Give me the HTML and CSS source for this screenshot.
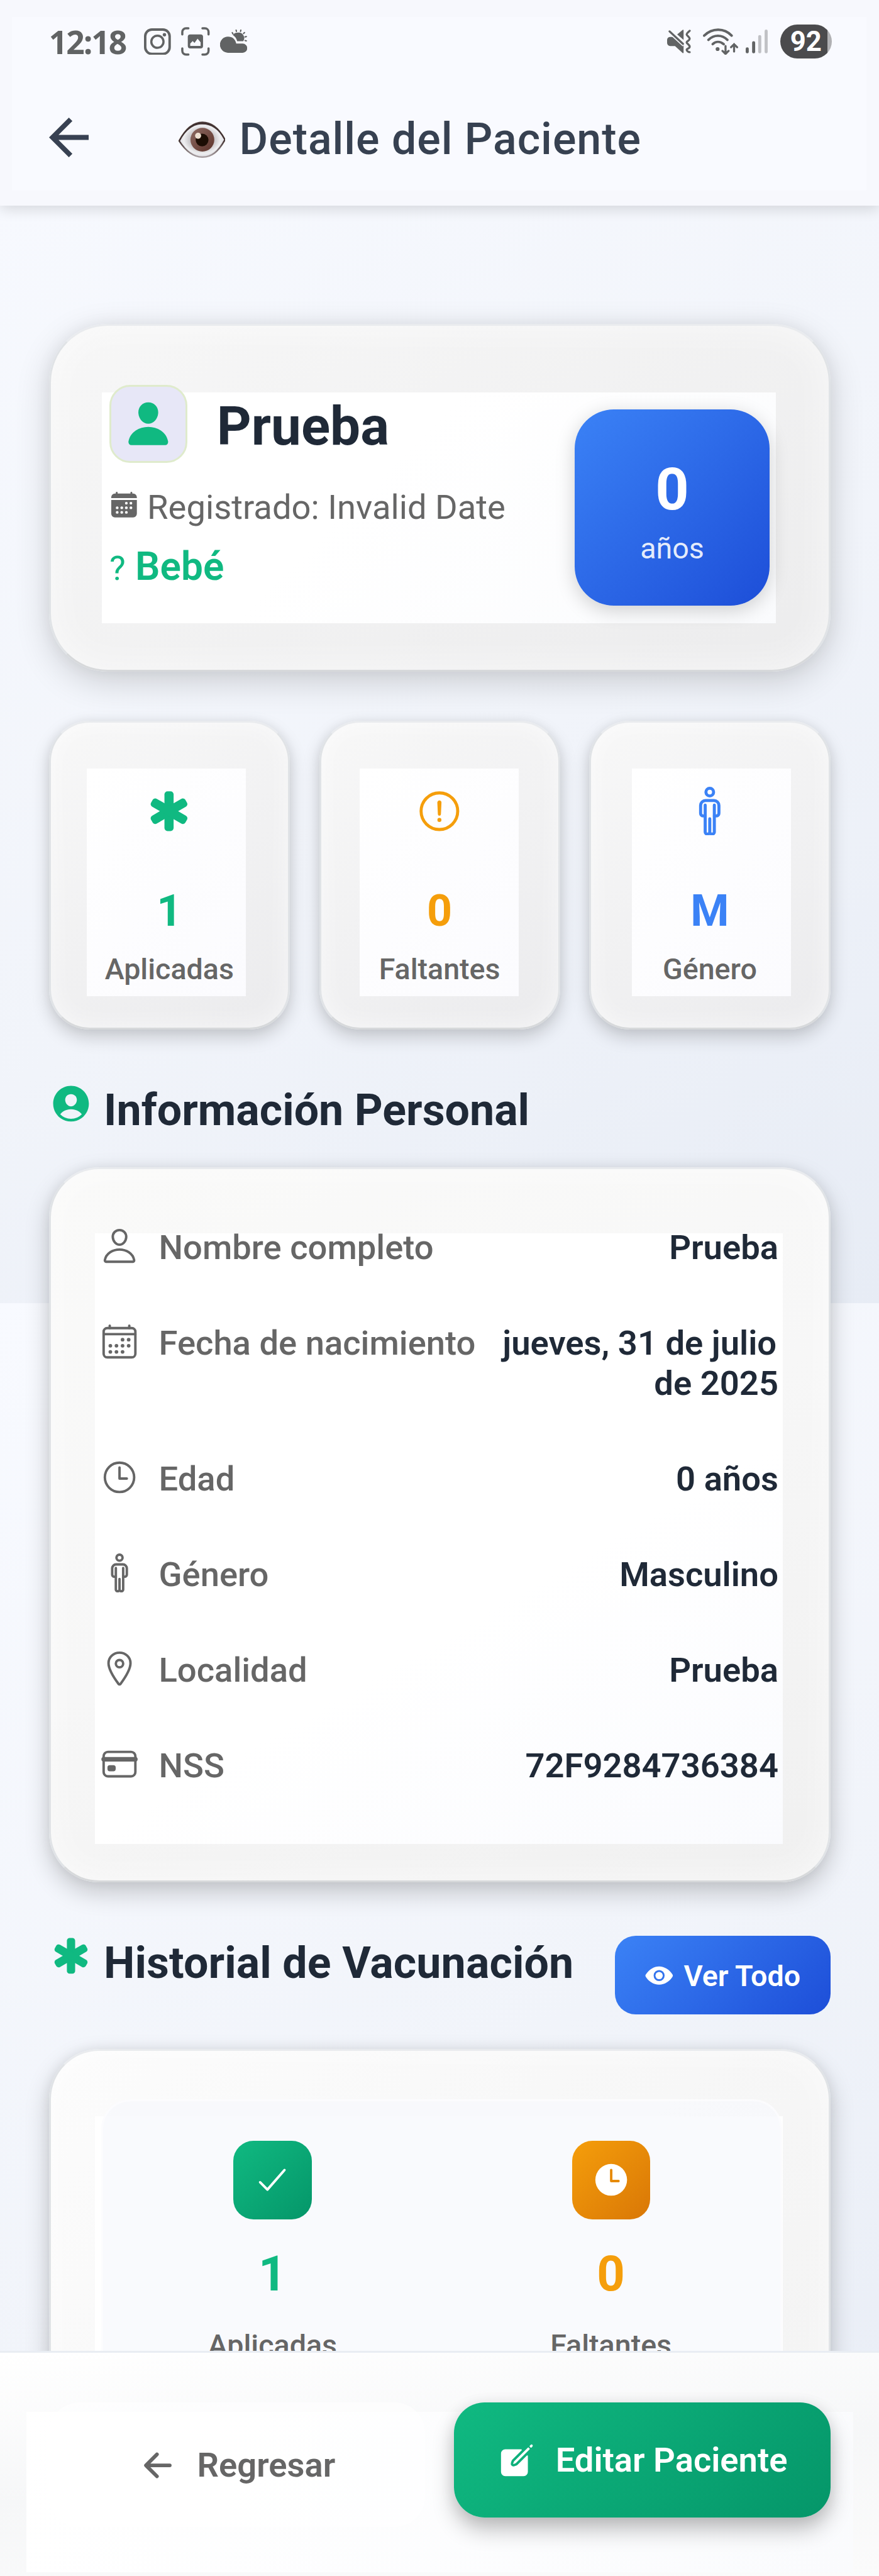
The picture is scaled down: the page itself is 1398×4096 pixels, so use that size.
FILE: index.html
```html
<!DOCTYPE html>
<html lang="es">
<head>
<meta charset="utf-8">
<title>Detalle del Paciente</title>
<link rel="stylesheet" href="styles.css">
</head>
<body>
<svg class="defs" width="0" height="0">
  <symbol id="man" viewBox="0 0 512 512"><g fill="none" stroke="currentColor" stroke-width="32" stroke-linecap="round" stroke-linejoin="round"><circle cx="256" cy="56" r="40"/><path d="M208 192v282a22 22 0 0 0 22 22h4a22 22 0 0 0 22-22V336v138a22 22 0 0 0 22 22h4a22 22 0 0 0 22-22V192"/><path d="M208 306h-20a28 28 0 0 1-28-28V196a52 52 0 0 1 52-52h88a52 52 0 0 1 52 52v82a28 28 0 0 1-28 28h-20"/></g></symbol>
  <symbol id="medical" viewBox="0 0 512 512"><g fill="currentColor"><rect x="208" y="48" width="96" height="416" rx="32"/><rect x="208" y="48" width="96" height="416" rx="32" transform="rotate(60 256 256)"/><rect x="208" y="48" width="96" height="416" rx="32" transform="rotate(120 256 256)"/></g></symbol>
</svg>
<div class="screen">
  <header class="header">
    <div class="status">
      <span class="clock">12:18</span>
      <svg class="st-insta" viewBox="0 0 44 44"><rect x="2" y="2" width="40" height="40" rx="11" fill="none" stroke="#616364" stroke-width="4"/><circle cx="22" cy="22" r="10" fill="none" stroke="#616364" stroke-width="3.6"/><circle cx="33.5" cy="10.500" r="2.8" fill="#616364"/></svg>
      <svg class="st-shot" viewBox="0 0 47 47"><g fill="none" stroke="#616364" stroke-width="3.6" stroke-linecap="round"><path d="M2 12V8a6 6 0 0 1 6-6h4M35 2h4a6 6 0 0 1 6 6v4M45 35v4a6 6 0 0 1-6 6h-4M12 45H8a6 6 0 0 1-6-6v-4"/></g><rect x="11" y="12" width="25" height="23" rx="4" fill="#616364"/><path d="M15 31v-4l4-4 3 3 5-7 5 6v6z" fill="#f9faff"/></svg>
      <svg class="st-cloud" viewBox="0 0 44 39"><path d="M30 5a9 9 0 0 1 8 14H28c-1-5-4-8-7-10 2-3 5-4 9-4z" fill="#616364"/><path d="M13 11.500c7 0 12 4 13.500 11.500H37a7.500 7.500 0 0 1 0 15H13a13 13 0 0 1 0-26.500z" fill="#616364"/><g stroke="#616364" stroke-width="2.200" stroke-linecap="round"><path d="M20 5l1 2M26.300 1l.5 2M34 1l-.5 2M40 5l-1.500 1.500M43 11.500l-2 .5M43 18.500l-2-.5"/></g></svg>
      <svg class="st-mute" viewBox="0 0 39 39"><path d="M5 12h5l17 14v11.500c0 1-.8 1.500-1.600.8L13 27H5a5 5 0 0 1-5-5v-5a5 5 0 0 1 5-5zM27 1.500V17L16.500 8l9-7.500c.8-.6 1.500 0 1.500 1z" fill="#616364"/><path d="M4 3l24 22" stroke="#f9faff" stroke-width="7"/><path d="M4 3l22 20.500" stroke="#616364" stroke-width="3.400" stroke-linecap="round"/><path d="M37 2c-3 3-5 4-5 6s5 4 5 7-5 4-5 6 5 4 5 7-5 3-5 5 3 4 5 4" fill="none" stroke="#616364" stroke-width="3.400" stroke-linecap="round"/></svg>
      <svg class="st-wifi" viewBox="0 0 58 44"><g fill="none" stroke="#616364" stroke-width="4" stroke-linecap="round"><path d="M2 12c13-13 33-13 45 0M9 19c9-9 22-9 31 0M16 26c5-5 12-5 18 0"/><path d="M37 29v12M32 37l5 5 5-5M51 38V26M46 31l5-5 5 5" stroke-width="3.400"/></g><circle cx="24" cy="34" r="3.200" fill="#616364"/></svg>
      <svg class="st-signal" viewBox="0 0 37 40"><rect y="29" width="5" height="10" rx="2.500" fill="#616364"/><rect x="10.500" y="19" width="5" height="20" rx="2.500" fill="#616364"/><rect x="20.500" y="9" width="5" height="30" rx="2.500" fill="#c0c1c5"/><rect x="31" y="0" width="5" height="39" rx="2.500" fill="#c0c1c5"/></svg>
      <span class="battery">92</span>
    </div>
    <div class="titlebar">
      <svg class="back" viewBox="4 4 16 16"><path d="M20 11H7.830l5.590-5.590L12 4l-8 8 8 8 1.410-1.410L7.830 13H20v-2z" fill="#384152"/></svg>
      <svg class="eye" viewBox="0 0 77 60">
        <defs>
          <radialGradient id="ball" cx=".5" cy=".5" r=".5"><stop offset=".5" stop-color="#c4c1c4"/><stop offset=".8" stop-color="#eeeef0"/><stop offset="1" stop-color="#dcdbe2"/></radialGradient>
          <linearGradient id="iris" x1="0" y1="0" x2="1" y2="1"><stop offset="0" stop-color="#8e6b64"/><stop offset="1" stop-color="#5c3229"/></linearGradient>
          <linearGradient id="lid" x1="0" y1="0" x2="0" y2="1"><stop offset="0" stop-color="#584745"/><stop offset=".5" stop-color="#3f2e2d"/><stop offset="1" stop-color="#aaa0a3"/></linearGradient>
        </defs>
        <path d="M1 32C12 11 24 1.500 39 1.500S66 11 76 30C65 50 54 58.500 39 58.500S12 49 1 32z" fill="url(#ball)" stroke="url(#lid)" stroke-width="2.500"/>
        <path d="M1 32C12 11 24 1.500 39 1.500S66 11 76 30C65 13 54 5 39 5S14 13 1 32z" fill="#3f302f"/>
        <circle cx="39" cy="30" r="19.500" fill="url(#iris)"/><circle cx="38.500" cy="30.500" r="10.500" fill="#1c0d04"/><circle cx="32" cy="23.500" r="5" fill="#eee0d2"/>
      </svg>
      <h1 class="title">Detalle del Paciente</h1>
    </div>
  </header>

  <main class="content">
    <section class="card hero">
      <div class="hero-info">
        <div class="hero-name">
          <span class="avatar"><svg viewBox="0 0 512 512"><path fill="#10b981" d="M332.640 64.580C313.180 43.570 286 32 256 32c-30.160 0-57.430 11.500-76.800 32.380-19.580 21.110-29.120 49.800-26.880 80.780C156.760 206.280 203.270 256 256 256s99.160-49.710 103.670-110.820c2.270-30.700-7.330-59.330-27.030-80.600zM432 480H80a31 31 0 0 1-24.200-11.130c-6.500-7.770-9.120-18.380-7.180-29.110C57.060 392.940 83.400 353.610 124.800 326c36.780-24.510 83.370-38 131.200-38s94.420 13.500 131.200 38c41.400 27.600 67.740 66.930 76.180 113.750 1.940 10.730-.68 21.340-7.180 29.110A31 31 0 0 1 432 480z"/></svg></span>
          <h2>Prueba</h2>
        </div>
        <div class="registered">
          <svg viewBox="0 0 512 512"><path fill="#666" d="M480 128a64 64 0 0 0-64-64h-16V48a16 16 0 0 0-32 0v16H144V48a16 16 0 0 0-32 0v16H96a64 64 0 0 0-64 64v16h448zM32 416a64 64 0 0 0 64 64h320a64 64 0 0 0 64-64V176H32z"/><g fill="#fdfdfd"><circle cx="296" cy="232" r="24"/><circle cx="376" cy="232" r="24"/><circle cx="136" cy="312" r="24"/><circle cx="216" cy="312" r="24"/><circle cx="296" cy="312" r="24"/><circle cx="376" cy="312" r="24"/><circle cx="136" cy="392" r="24"/><circle cx="216" cy="392" r="24"/><circle cx="296" cy="392" r="24"/></g></svg>
          <span>Registrado: Invalid Date</span>
        </div>
        <div class="stage"><span class="q">?</span><strong>Bebé</strong></div>
      </div>
      <div class="age"><strong>0</strong><span>años</span></div>
    </section>

    <section class="stats">
      <div class="card stat stat-a green"><svg><use href="#medical"/></svg><strong>1</strong><span>Aplicadas</span></div>
      <div class="card stat stat-b orange"><svg viewBox="0 0 512 512"><circle cx="256" cy="256" r="192" fill="none" stroke="currentColor" stroke-width="32"/><path d="M250.260 166.050L256 288l5.730-121.950a5.740 5.740 0 0 0-5.790-6 5.740 5.740 0 0 0-5.680 6z" fill="currentColor" stroke="currentColor" stroke-width="32" stroke-linecap="round" stroke-linejoin="round"/><circle cx="256" cy="348" r="21" fill="currentColor"/></svg><strong>0</strong><span>Faltantes</span></div>
      <div class="card stat stat-c blue"><svg><use href="#man"/></svg><strong>M</strong><span>Género</span></div>
    </section>

    <div class="section-head first">
      <svg class="green" viewBox="0 0 512 512"><path fill="currentColor" d="M256 48C141.310 48 48 141.310 48 256s93.310 208 208 208 208-93.310 208-208S370.690 48 256 48zm-50.220 116.820C218.450 151.390 236.280 144 256 144s37.390 7.440 50.110 20.940c12.890 13.680 19.160 32.060 17.680 51.820C320.830 256 290.430 288 256 288s-64.890-32-67.790-71.250c-1.470-19.920 4.790-38.360 17.570-51.930zM256 432a175.490 175.490 0 0 1-126-53.220 122.910 122.910 0 0 1 35.140-33.440C190.630 329 222.890 320 256 320s65.370 9 90.830 25.340A122.870 122.870 0 0 1 382 378.780 175.450 175.450 0 0 1 256 432z"/></svg>
      <h3>Información Personal</h3>
    </div>

    <section class="card info">
      <div class="row"><svg viewBox="0 0 512 512"><path d="M344 144c-3.920 52.870-44 96-88 96s-84.150-43.120-88-96c-4-55 35-96 88-96s92 42 88 96z"/><path d="M256 304c-87 0-175.300 48-191.640 138.600C62.390 453.520 68.570 464 80 464h352c11.440 0 17.620-10.480 15.650-21.400C431.300 352 343 304 256 304z"/></svg><span class="label">Nombre completo</span><span class="value">Prueba</span></div>
      <div class="row"><svg viewBox="0 0 512 512"><rect x="48" y="80" width="416" height="384" rx="48"/><path d="M128 48v32M384 48v32M464 160H48"/><g class="dots"><circle cx="296" cy="232" r="24"/><circle cx="376" cy="232" r="24"/><circle cx="136" cy="312" r="24"/><circle cx="216" cy="312" r="24"/><circle cx="296" cy="312" r="24"/><circle cx="376" cy="312" r="24"/><circle cx="136" cy="392" r="24"/><circle cx="216" cy="392" r="24"/><circle cx="296" cy="392" r="24"/></g></svg><span class="label">Fecha de nacimiento</span><span class="value"><span class="wrapped">jueves, 31 de julio</span><br>de 2025</span></div>
      <div class="row"><svg viewBox="0 0 512 512"><circle cx="256" cy="256" r="192"/><path d="M256 128v144h96"/></svg><span class="label">Edad</span><span class="value">0 años</span></div>
      <div class="row"><svg><use href="#man"/></svg><span class="label">Género</span><span class="value">Masculino</span></div>
      <div class="row"><svg viewBox="0 0 512 512"><path d="M256 48c-79.500 0-144 61.390-144 137 0 87 96 224.870 131.250 272.490a15.770 15.770 0 0 0 25.500 0C304 409.890 400 272.070 400 185c0-75.610-64.500-137-144-137z"/><circle cx="256" cy="192" r="48"/></svg><span class="label">Localidad</span><span class="value">Prueba</span></div>
      <div class="row"><svg viewBox="0 0 512 512"><rect x="48" y="96" width="416" height="320" rx="56"/><path d="M48 192h416M128 300h48v20h-48z" stroke-width="60"/></svg><span class="label">NSS</span><span class="value">72F9284736384</span></div>
    </section>

    <div class="section-head second">
      <svg class="green"><use href="#medical"/></svg>
      <h3>Historial de Vacunación</h3>
      <button class="see-all"><svg viewBox="0 0 512 512"><circle cx="256" cy="256" r="64" fill="#fff"/><path fill="#fff" d="M490.840 238.600c-26.460-40.920-60.790-75.680-99.270-100.530C349 110.550 302 96 255.660 96c-42.520 0-84.330 12.150-124.270 36.110-40.730 24.430-77.630 60.120-109.680 106.070a31.920 31.920 0 0 0-.64 35.540c26.410 41.330 60.400 76.140 98.280 100.650C162 402 207.900 416 255.660 416c46.710 0 93.810-14.430 136.200-41.720 38.460-24.770 72.720-59.660 99.080-100.920a32.200 32.200 0 0 0-.1-34.760zM256 352a96 96 0 1 1 96-96 96.110 96.110 0 0 1-96 96z"/></svg>Ver Todo</button>
    </div>

    <section class="card history">
      <div class="panel">
        <div class="count green"><span class="chip chip-green"><svg viewBox="0 0 512 512"><path d="M416 128L192 384l-96-96" fill="none" stroke="#fff" stroke-width="32" stroke-linecap="round" stroke-linejoin="round"/></svg></span><strong>1</strong><span class="cap">Aplicadas</span></div>
        <div class="count orange"><span class="chip chip-orange"><svg viewBox="0 0 512 512"><circle cx="256" cy="256" r="208" fill="#fff"/><path d="M256 128v144h96" fill="none" stroke="#e68a09" stroke-width="32" stroke-linecap="round" stroke-linejoin="round"/></svg></span><strong>0</strong><span class="cap">Faltantes</span></div>
      </div>
    </section>
  </main>

  <footer class="footer">
    <button class="btn btn-back"><svg viewBox="0 0 512 512"><path d="M244 400L100 256l144-144M120 256h292" fill="none" stroke="#666" stroke-width="48" stroke-linecap="round" stroke-linejoin="round"/></svg>Regresar</button>
    <button class="btn btn-edit"><svg viewBox="0 0 512 512"><path fill="#fff" d="M459.940 53.250a16.060 16.060 0 0 0-23.220-.56L424.350 65a8 8 0 0 0 0 11.310l11.340 11.320a8 8 0 0 0 11.340 0l12.060-12c6.100-6.090 6.670-16.010.85-22.380zM399.340 90L218.820 270.200a9 9 0 0 0-2.310 3.930L208.160 299a3.910 3.910 0 0 0 4.860 4.860l24.850-8.350a9 9 0 0 0 3.930-2.310L422 112.660a9 9 0 0 0 0-12.660l-9.950-10a9 9 0 0 0-12.710 0z"/><path fill="#fff" d="M386.340 193.660L264.450 315.790A41.080 41.080 0 0 1 247.580 326l-25.900 8.670a35.920 35.920 0 0 1-44.330-44.330l8.670-25.900a41.080 41.080 0 0 1 10.190-16.870l122.130-121.910a8 8 0 0 0-5.650-13.660H104a56 56 0 0 0-56 56v240a56 56 0 0 0 56 56h240a56 56 0 0 0 56-56V199.310a8 8 0 0 0-13.660-5.650z"/></svg>Editar Paciente</button>
  </footer>
</div>
</body>
</html>
```

FILE: styles.css
```css
* { box-sizing: border-box; }
html, body { margin: 0; overflow: hidden; }
body { font-family: Roboto, "Liberation Sans", sans-serif; }
h1, h2, h3 { margin: 0; }
svg { display: block; flex: none; }
button { border: 0; font: inherit; }
.defs { position: absolute; }

.green { color: #10b981; }
.orange { color: #f59e0b; }
.blue { color: #3b82f6; }

.screen {
  zoom: 0.971;
  width: 1440px;
  height: 4219px;
  display: flex;
  flex-direction: column;
  overflow: hidden;
  background: linear-gradient(146deg, #f8faff 0%, #f1f4fa 58%, #e7ecf5 100%) 0 0 / 1440px 2134px repeat-y;
}

/* Header */
.header {
  flex: none;
  height: 337px;
  position: relative;
  z-index: 1;
  background: linear-gradient(#f9faff, #f9faff) 20px 28px / 1400px 284px no-repeat, #f7f8fd;
  box-shadow: 0 6px 22px rgba(0, 0, 0, .14);
}
.status {
  display: flex;
  align-items: center;
  height: 96px;
  padding: 40px 78px 0 80px;
}
.clock {
  font: 700 53px/56px "Open Sans", sans-serif;
  letter-spacing: -2px;
  color: #616364;
  width: 156px;
}
.st-insta { width: 44px; height: 44px; margin-right: 17px; }
.st-shot { width: 47px; height: 47px; margin-right: 17px; }
.st-cloud { width: 44px; height: 39px; margin-right: auto; }
.st-mute { width: 39px; height: 39px; margin-right: 19px; }
.st-wifi { width: 58px; height: 44px; margin-right: 12px; }
.st-signal { width: 37px; height: 40px; margin-right: 20px; }
.battery {
  width: 84px;
  height: 56px;
  border-radius: 28px;
  text-align: center;
  font: 700 45px/57px Roboto, sans-serif;
  color: #fff;
  background: linear-gradient(90deg, #4b4b4d 77px, #b0b0b3 77px);
}
.titlebar {
  display: flex;
  align-items: center;
  height: 241px;
  padding: 18px 80px 0;
}
.back { width: 65px; height: 65px; }
.eye { width: 77px; height: 60px; margin: 6px 23px 0 147px; }
.title { font-size: 72px; font-weight: 500; line-height: 84px; letter-spacing: 1px; color: #374151; margin-top: 6px; white-space: nowrap; }

/* Content */
.content { flex: 1; min-height: 0; overflow: hidden; padding: 193px 80px 0; }

.card {
  border: 4px solid;
  border-color: #e9ebee #e0e3e6 #d7d9db;
}
.hero {
  display: flex;
  justify-content: space-between;
  align-items: flex-start;
  height: 570px;
  padding: 97px 96px 95px;
  border-radius: 96px;
  background:
    linear-gradient(135deg, #fff 40%, #fafbfd) 84px 110px / 1104px 378px no-repeat,
    linear-gradient(150deg, #f7f7f7, #ececed);
  background-origin: padding-box;
  box-shadow: 0 16px 56px rgba(0, 0, 0, .16), 0 0 26px rgba(0, 0, 0, .05), inset 0 0 64px rgba(255, 255, 255, .6);
}
.hero-name { display: flex; gap: 48px; }
.avatar {
  width: 128px;
  height: 128px;
  border: 4px solid #dfebcc;
  border-radius: 34px;
  background: #e7e7f7;
  display: grid;
  place-items: center;
}
.avatar svg { width: 80px; height: 80px; }
.hero h2 { font-size: 88px; line-height: 128px; margin-top: 4px; margin-bottom: -4px; color: #1f2937; }
.registered { display: flex; gap: 14px; margin-top: 40px; font-size: 56px; line-height: 66px; color: #666; white-space: nowrap; }
.registered svg { width: 48px; height: 48px; margin-top: 4px; }
.stage { display: flex; align-items: baseline; gap: 16px; margin-top: 26px; color: #10b981; line-height: 76px; font-size: 64px; }
.stage strong { font-weight: 600; }
.q { font-size: 56px; }
.age {
  width: 320px;
  height: 322px;
  margin-top: 40px;
  padding-top: 77px;
  border-radius: 64px;
  background: linear-gradient(135deg, #3b82f6, #1d4ed8);
  box-shadow: 0 8px 32px rgba(0, 0, 0, .18);
  display: flex;
  flex-direction: column;
  align-items: center;
  gap: 11px;
}
.age strong { font-size: 96px; line-height: 112px; color: #fff; }
.age span { font-size: 48px; line-height: 56px; color: rgba(255, 255, 255, .9); }

.stats { display: grid; grid-template-columns: repeat(3, 1fr); gap: 48px; margin-top: 80px; }
.stat {
  --x: 59px;
  height: 506px;
  padding-top: 105px;
  border-radius: 66px;
  display: flex;
  flex-direction: column;
  align-items: center;
  background:
    linear-gradient(135deg, #fff, #fbfbfe) var(--x) 75px / 261px 373px no-repeat,
    linear-gradient(145deg, #f8f8f8, #ebebed);
  background-origin: padding-box;
  box-shadow: 0 12px 28px rgba(0, 0, 0, .18), 0 0 16px rgba(0, 0, 0, .05), inset 0 0 40px rgba(255, 255, 255, .6);
}
.stat-b { --x: 63px; }
.stat-c { --x: 67px; }
.stat svg { width: 80px; height: 80px; }
.stat strong { font-size: 72px; line-height: 84px; margin-top: 82px; }
.stat span { font-size: 48px; font-weight: 500; line-height: 56px; margin-top: 25px; color: #666; }

.section-head { display: flex; gap: 18px; align-items: flex-start; }
.section-head > svg { width: 72px; height: 72px; }
.section-head h3 { font-size: 72px; line-height: 84px; color: #1f2937; white-space: nowrap; }
.first { margin: 85px 0 50px; }
.first h3 { margin-top: 6px; margin-bottom: 0; }
.second { height: 129px; margin: 88px 0 56px; }
.second > svg { margin-top: -3px; }
.second h3 { margin-top: 3px; letter-spacing: .1px; }
.see-all {
  width: 353px;
  height: 129px;
  margin-left: auto;
  padding: 2px 0 0;
  border-radius: 34px;
  display: flex;
  align-items: center;
  justify-content: center;
  gap: 16px;
  font-size: 48px;
  font-weight: 600;
  color: #fff;
  white-space: nowrap;
  background: linear-gradient(135deg, #3b82f6, #1d4ed8);
}
.see-all svg { width: 48px; height: 48px; }

.info, .history {
  border-radius: 82px;
  background-origin: padding-box;
  box-shadow: 0 16px 40px rgba(0, 0, 0, .2), 0 0 20px rgba(0, 0, 0, .06), inset 0 0 60px rgba(255, 255, 255, .6);
}
.info {
  display: flex;
  flex-direction: column;
  gap: 90px;
  height: 1171px;
  padding: 96px 82px 0 81px;
  background-image:
    linear-gradient(150deg, #fff 60%, #fafbfe),
    linear-gradient(155deg, #fafaf9, #f7f7f7 50%, #f0f0f0);
  background-size: 1127px 1000px, auto;
  background-position: 72px 106px, 0 0;
  background-repeat: no-repeat;
}
.row { display: flex; align-items: flex-start; font-size: 56px; line-height: 66.500px; white-space: nowrap; }
.row svg {
  width: 64px;
  height: 64px;
  margin: -2px 32px -2px 0;
  color: #666;
  fill: none;
  stroke: #666;
  stroke-width: 32px;
  stroke-linecap: round;
  stroke-linejoin: round;
}
.row svg path[stroke-width="60"] { stroke-width: 60px; }
.row .dots { fill: #666; stroke: none; }
.label { font-weight: 500; color: #666; }
.value { margin-left: auto; font-weight: 600; color: #1f2937; text-align: right; }
.wrapped { margin-right: 3px; }

.history {
  height: 700px;
  padding: 80px 77px 80px 83px;
  background-image:
    linear-gradient(#fff, #fff),
    linear-gradient(135deg, #fcfcfc, #f3f3f3);
  background-size: 1127px 600px, auto;
  background-position: 72px 108px, 0 0;
  background-repeat: no-repeat;
}
.panel {
  display: flex;
  height: 560px;
  padding-top: 65px;
  margin-right: -1px;
  border: 4px solid rgba(255, 255, 255, .5);
  border-radius: 48px;
  background: rgba(247, 249, 252, .8);
}
.count { flex: 1; display: flex; flex-direction: column; align-items: center; }
.chip { width: 128px; height: 128px; border-radius: 33px; display: grid; place-items: center; }
.chip svg { width: 64px; height: 64px; }
.chip-green { background: linear-gradient(135deg, #10b981, #059669); }
.chip-orange { background: linear-gradient(135deg, #f59e0b, #d97706); }
.count strong { font-size: 80px; line-height: 94px; margin-top: 43px; }
.cap { font-size: 48px; font-weight: 500; line-height: 56px; margin-top: 41px; color: #666; }

/* Footer */
.footer {
  flex: none;
  height: 369px;
  display: flex;
  gap: 48px;
  align-items: flex-start;
  padding: 81px 80px 0;
  border-top: 4px solid #e9edf3;
  background:
    linear-gradient(100deg, #fff, #fafbfd) 43px 96px / 1354px 263px no-repeat,
    linear-gradient(175deg, #fff, #f6f7f8 50%, #fbfbfb);
  background-origin: padding-box;
}
.btn {
  flex: 1;
  height: 188px;
  padding: 2px 0 0;
  border-radius: 50px;
  display: flex;
  align-items: center;
  justify-content: center;
  gap: 32px;
  font-size: 56px;
  line-height: 66px;
  font-weight: 600;
  white-space: nowrap;
}
.btn svg { width: 64px; height: 64px; }
.btn-back { height: 204px; color: #666; background: rgba(255, 255, 255, .6); }
.btn-edit { color: #fff; background: linear-gradient(135deg, #10b981, #059669); box-shadow: 0 20px 36px rgba(0, 0, 0, .24), 0 4px 24px rgba(0, 0, 0, .08); }
```
